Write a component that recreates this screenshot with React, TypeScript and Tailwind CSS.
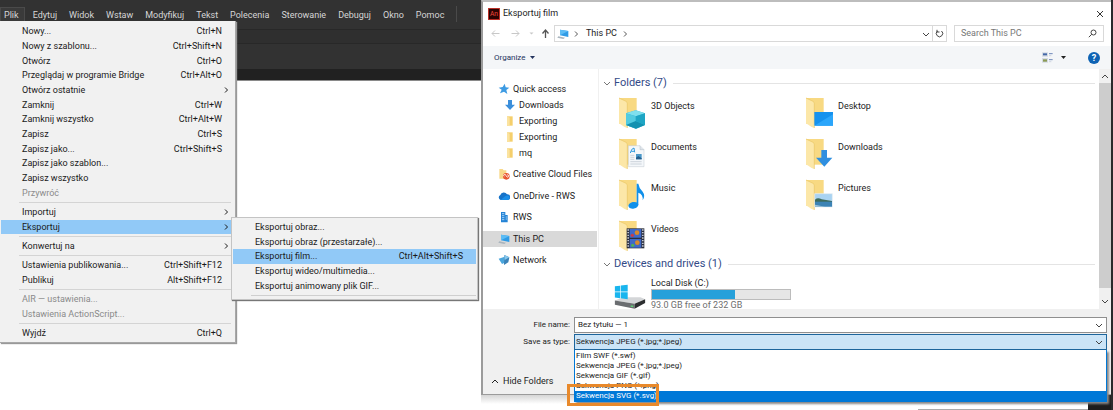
import { ReactNode } from 'react'
import clsx from 'clsx'

type MenuEntry = {
  label: string
  keys?: string
  submenu?: boolean
  disabled?: boolean
  active?: boolean
}

const MENU_BAR = [
  'Plik',
  'Edytuj',
  'Widok',
  'Wstaw',
  'Modyfikuj',
  'Tekst',
  'Polecenia',
  'Sterowanie',
  'Debuguj',
  'Okno',
  'Pomoc',
]

const FILE_MENU: MenuEntry[][] = [
  [
    { label: 'Nowy...', keys: 'Ctrl+N' },
    { label: 'Nowy z szablonu...', keys: 'Ctrl+Shift+N' },
    { label: 'Otwórz', keys: 'Ctrl+O' },
    { label: 'Przeglądaj w programie Bridge', keys: 'Ctrl+Alt+O' },
    { label: 'Otwórz ostatnie', submenu: true },
    { label: 'Zamknij', keys: 'Ctrl+W' },
    { label: 'Zamknij wszystko', keys: 'Ctrl+Alt+W' },
    { label: 'Zapisz', keys: 'Ctrl+S' },
    { label: 'Zapisz jako...', keys: 'Ctrl+Shift+S' },
    { label: 'Zapisz jako szablon...' },
    { label: 'Zapisz wszystko' },
    { label: 'Przywróć', disabled: true },
  ],
  [
    { label: 'Importuj', submenu: true },
    { label: 'Eksportuj', submenu: true, active: true },
  ],
  [{ label: 'Konwertuj na', submenu: true }],
  [
    { label: 'Ustawienia publikowania...', keys: 'Ctrl+Shift+F12' },
    { label: 'Publikuj', keys: 'Alt+Shift+F12' },
  ],
  [
    { label: 'AIR — ustawienia...', disabled: true },
    { label: 'Ustawienia ActionScript...', disabled: true },
  ],
  [{ label: 'Wyjdź', keys: 'Ctrl+Q' }],
]

// heights of the groups above, one line is a bit under 15px
const GROUP_HEIGHTS = ['h-44', 'h-[29px]', 'h-[14px]', 'h-[29px]', 'h-[29px]', 'h-[14px]']

const EXPORT_MENU: MenuEntry[] = [
  { label: 'Eksportuj obraz...' },
  { label: 'Eksportuj obraz (przestarzałe)...' },
  { label: 'Eksportuj film...', keys: 'Ctrl+Alt+Shift+S', active: true },
  { label: 'Eksportuj wideo/multimedia...' },
  { label: 'Eksportuj animowany plik GIF...' },
]

const FILE_TYPES = [
  'Film SWF (*.swf)',
  'Sekwencja JPEG (*.jpg;*.jpeg)',
  'Sekwencja GIF (*.gif)',
  'Sekwencja PNG (*.png)',
  'Sekwencja SVG (*.svg)',
]

function Chevron({ dir, className }: { dir: 'up' | 'down' | 'right'; className?: string }) {
  const d = {
    up: 'M1 6 L4 3 L7 6',
    down: 'M1 3 L4 6 L7 3',
    right: 'M3 1.5 L5.5 4 L3 6.5',
  }[dir]
  return (
    <svg viewBox="0 0 8 8" className={clsx('size-2 shrink-0', className)} fill="none" stroke="currentColor">
      <path d={d} />
    </svg>
  )
}

function MenuRow({ item, className }: { item: MenuEntry; className: string }) {
  return (
    <button
      type="button"
      disabled={item.disabled}
      className={clsx(
        'flex min-h-0 w-full items-center justify-between leading-3 whitespace-nowrap',
        item.disabled ? 'text-[#8a8a8a]' : 'text-[#1a1a1a]',
        item.active && 'bg-[#91c9f7]',
        className,
      )}
    >
      <span>{item.label}</span>
      {item.keys && <span>{item.keys}</span>}
      {item.submenu && <Chevron dir="right" className="-mr-2" />}
    </button>
  )
}

function FileMenu() {
  return (
    <div className="absolute top-[21px] left-0 z-10 w-[236px] border-r border-b border-[#a8a8a8] bg-[#f1f1f1] pt-[3px] pb-0.5 text-[9px] shadow-[1px_1px_1px_#999]">
      {FILE_MENU.map((group, i) => (
        <div key={i}>
          {i > 0 && (
            <div className="flex h-[5px] items-center pr-1 pl-[19px]">
              <hr className="w-full border-[#d4d4d4]" />
            </div>
          )}
          <div className={clsx('grid auto-rows-fr pr-[3px] pl-px', GROUP_HEIGHTS[i])}>
            {group.map((item) => (
              <MenuRow key={item.label} item={item} className="pr-[10px] pl-[21px]" />
            ))}
          </div>
        </div>
      ))}
    </div>
  )
}

function ExportMenu() {
  return (
    <div className="absolute top-[217px] left-[231px] z-20 w-[247px] border border-[#c4c4c4] bg-[#f1f1f1] px-px pt-0.5 pb-[3px] text-[9px] shadow-[1px_1px_1px_#777]">
      <div className="grid h-[73px] auto-rows-fr">
        {EXPORT_MENU.map((item) => (
          <MenuRow key={item.label} item={item} className="pr-[13px] pl-[22px]" />
        ))}
      </div>
      <hr className="mt-0.5 ml-[18px] border-[#cfcfcf]" />
    </div>
  )
}

function Editor() {
  return (
    <section className="relative w-[481px] shrink-0 bg-white">
      <nav className="flex h-[29px] items-end bg-[#323232] pb-[7px] text-[9px] text-[#d6d6d6]">
        <div className="flex items-center gap-1">
          {MENU_BAR.map((name, i) => (
            <button
              key={name}
              type="button"
              className={clsx(
                'h-[14px] border border-b-0 px-[3px] leading-3',
                i === 0 ? 'border-[#4a4a4a] bg-[#3a3a3a] pr-[5px]' : 'border-transparent',
              )}
            >
              {name}
            </button>
          ))}
          <div className="ml-1 h-4 w-px bg-[#4a4a4a]" />
        </div>
      </nav>
      <div className="h-[15px] border-y border-[#282828] bg-[#2f2f2f]" />
      <div className="h-[25px] bg-[#323232]" />
      <div className="h-3 border-b border-[#8a8a8a] bg-[#212121]" />
      <FileMenu />
      <ExportMenu />
    </section>
  )
}

// ---- small icons ----

function PcIcon({ className }: { className?: string }) {
  return (
    <svg viewBox="0 0 36 36" className={clsx('size-3 shrink-0', className)}>
      <path d="M9 5 L34 9 V27 L9 22Z" fill="#2f9be6" />
      <path d="M9 5 L34 9 L9 22Z" fill="#5cbcf5" />
      <path d="M4 25 L24 29 L19 33 L1 29Z" fill="#a9b4bd" />
    </svg>
  )
}

function MiniFolder() {
  return (
    <svg viewBox="0 0 36 36" className="size-3 shrink-0">
      <path d="M9 4 H26 V32 H9Z" fill="#f5cf6c" />
      <path d="M9 4 L17 8 V34 L9 30Z" fill="#fbe3a0" />
    </svg>
  )
}

function StarIcon() {
  return (
    <svg viewBox="0 0 36 36" className="size-3 shrink-0">
      <path d="M20 2 L23 13 L34 14 L25 21 L28 33 L18 26 L6 31 L11 20 L2 14 L14 12Z" fill="#3d9be3" />
    </svg>
  )
}

function DownIcon() {
  return (
    <svg viewBox="0 0 36 36" className="size-3 shrink-0">
      <path d="M12 3 H24 V17 H33 L18 33 L3 17 H12Z" fill="#3b8fdb" />
    </svg>
  )
}

function CreativeCloudIcon() {
  return (
    <svg viewBox="0 0 36 36" className="size-3 shrink-0">
      <path d="M4 3 H14 L17 7 H25 V32 H4Z" fill="#f8d88a" />
      <circle cx="25" cy="25" r="10" fill="#e8542f" />
      <path d="M19 26 a3.500 3.500 0 1 1 5 -3 l3 4 a3.500 3.500 0 1 0 0 -6" fill="none" stroke="#fff" strokeWidth="2.500" />
    </svg>
  )
}

function OneDriveIcon() {
  return (
    <svg viewBox="0 0 36 36" className="size-3 shrink-0">
      <path d="M8 30 a8 8 0 0 1 -1 -15 A11 11 0 0 1 27 13 A8.500 8.500 0 0 1 29 30Z" fill="#1673c9" />
      <path d="M8 30 L22 18 Q35 14 35 24 Q34 30 29 30Z" fill="#1a8ee8" />
    </svg>
  )
}

function BuildingIcon() {
  return (
    <svg viewBox="0 0 36 36" className="size-3 shrink-0">
      <path d="M9 3 H22 V12 H29 V34 H9Z" fill="#2484d6" />
      <path d="M12 8 H19 M12 14 H19 M12 20 H19 M23 18 H27 M23 24 H27 M12 26 H19" stroke="#bfe0fa" strokeWidth="2.500" />
    </svg>
  )
}

function NetworkIcon() {
  return (
    <svg viewBox="0 0 36 36" className="size-3 shrink-0">
      <path d="M2 14 L20 8 V26 L12 30Z" fill="#4aa6dd" />
      <path d="M19 3 L34 10 L31 25 L18 33Z" fill="#3a82b8" />
      <path d="M19 3 L34 10 L20 18Z" fill="#86c7ec" />
    </svg>
  )
}

function FolderIcon({ children }: { children: ReactNode }) {
  return (
    <svg viewBox="0 0 84 96" className="h-8 w-7 shrink-0">
      <path d="M3 3 H56 V80 H3Z" fill="#f8d982" />
      <path d="M3 3 L24 13 Q28 15 28 20 V93 L20 90 L3 79Z" fill="#fce7a8" />
      <path d="M3 3 L24 13 Q28 15 28 20 V93" fill="none" stroke="#e9c664" strokeWidth="2" />
      {children}
    </svg>
  )
}

const FOLDERS: { name: string; badge: ReactNode }[] = [
  {
    name: '3D Objects',
    badge: (
      <>
        <path d="M24 49 L53 40 L81 49 V84 L54 95 L24 84Z" fill="#2fb6d3" />
        <path d="M24 49 L53 40 L81 49 L54 58Z" fill="#7fe0ee" />
        <path d="M24 49 L54 58 V95 L24 84Z" fill="#52cbe0" />
        <path d="M24 84 L53 72 L81 84 L54 95Z" fill="#1391b0" />
        <path d="M53 58 L81 49 V84 L53 72Z" fill="#1ea5c4" />
      </>
    ),
  },
  {
    name: 'Desktop',
    badge: (
      <>
        <path d="M28 45 H84 V86 H28Z" fill="#1592ee" />
        <path d="M28 86 L84 52 V86Z" fill="#2ba6fb" />
      </>
    ),
  },
  {
    name: 'Documents',
    badge: (
      <>
        <path d="M31 23 H66 L78 35 V86 H31Z" fill="#f4f7fa" stroke="#c0c8d0" strokeWidth="1.500" />
        <path d="M66 23 V35 H78" fill="#dfe5ea" stroke="#b4bec8" strokeWidth="1.500" />
        <path d="M37 45 Q40 31 48 30 L50 43 M40 40 H48" fill="none" stroke="#2f9ade" strokeWidth="3" />
        <path d="M54 48 H71 V64 H54Z" fill="#4a98c9" />
        <path d="M54 59 L61 54 L71 61 V64 H54Z" fill="#255e8c" />
        <path d="M37 52 H49 M37 58 H49 M37 64 H49 M37 71 H71 M37 78 H71" stroke="#b9c3cc" strokeWidth="2" />
      </>
    ),
  },
  {
    name: 'Downloads',
    badge: <path d="M49 36 H66 V59 H82 L58 86 L33 59 H49Z" fill="#2f8fe0" />,
  },
  {
    name: 'Music',
    badge: (
      <>
        <ellipse cx="46" cy="79" rx="15" ry="10" fill="#1090ea" transform="rotate(-12 46 79)" />
        <path d="M56 14 H61 Q63 28 74 38 Q83 50 74 64 Q76 46 61 41 V79 H56Z" fill="#1090ea" />
      </>
    ),
  },
  {
    name: 'Pictures',
    badge: (
      <>
        <path d="M29 44 H82 V84 H29Z" fill="#a9d3f2" stroke="#e8eef2" strokeWidth="2" />
        <path d="M30 62 Q38 54 50 61 L81 66 V70 H30Z" fill="#3d6b5c" />
        <path d="M30 68 H81 V83 H30Z" fill="#3c83b5" />
        <path d="M30 77 L60 83 H30Z" fill="#9fc4d8" />
      </>
    ),
  },
  {
    name: 'Videos',
    badge: (
      <>
        <path d="M26 25 H79 V85 H26Z" fill="#2b2e3a" />
        <path d="M35 27 H70 V53 H35Z M35 57 H70 V83 H35Z" fill="#3f69c9" />
        <circle cx="57" cy="38" r="7" fill="#d98a2c" />
        <circle cx="43" cy="46" r="5" fill="#c93d4a" />
        <circle cx="58" cy="68" r="7" fill="#d98a2c" />
        <circle cx="44" cy="76" r="5" fill="#4fb05a" />
        <path d="M30.500 28 V84 M74.500 28 V84" stroke="#e2e6ee" strokeWidth="4" strokeDasharray="4 4" />
      </>
    ),
  },
]

function DriveIcon() {
  return (
    <svg viewBox="0 0 96 76" className="h-[25px] w-8 shrink-0">
      <path d="M2 50 L28 40 H80 L94 46 L62 60Z" fill="#d4d6d8" />
      <path d="M2 50 L62 60 V75 L2 63Z" fill="#6a6d70" />
      <path d="M62 60 L94 46 V58 L62 75Z" fill="#2c2e30" />
      <path d="M50 65 L58 66 V70 L50 69Z" fill="#5fe07a" />
      <path d="M2 7 L18 5 V23 H2Z M20 4.500 L41 2 V23 H20Z M2 25 H18 V43 L2 41Z M20 25 H41 V46 L20 43Z" fill="#19b5ee" />
    </svg>
  )
}

const QUICK_LINKS: { name: string; icon: ReactNode }[] = [
  { name: 'Downloads', icon: <DownIcon /> },
  { name: 'Exporting', icon: <MiniFolder /> },
  { name: 'Exporting', icon: <MiniFolder /> },
  { name: 'mq', icon: <MiniFolder /> },
]

const PLACES: { name: string; icon: ReactNode; selected?: boolean }[] = [
  { name: 'Creative Cloud Files', icon: <CreativeCloudIcon /> },
  { name: 'OneDrive - RWS', icon: <OneDriveIcon /> },
  { name: 'RWS', icon: <BuildingIcon /> },
  { name: 'This PC', icon: <PcIcon />, selected: true },
  { name: 'Network', icon: <NetworkIcon /> },
]

function AddressRow() {
  return (
    <div className="flex h-[17px] items-center pr-[7px] pl-2 text-[9px]">
      <div className="flex w-[63px] items-center gap-[9px]">
        <button type="button" aria-label="Back" className="text-[#c8c8c8]">
          <svg viewBox="0 0 9 9" className="size-[9px]" fill="none" stroke="currentColor">
            <path d="M4 1.500 L1 4.500 L4 7.500 M1 4.500 H8.500" />
          </svg>
        </button>
        <button type="button" aria-label="Forward" className="ml-0.5 text-[#c8c8c8]">
          <svg viewBox="0 0 9 9" className="size-[9px]" fill="none" stroke="currentColor">
            <path d="M5 1.500 L8 4.500 L5 7.500 M8 4.500 H0.500" />
          </svg>
        </button>
        <button type="button" aria-label="Recent locations" className="text-[#c8c8c8]">
          <svg viewBox="0 0 5 5" className="size-[5px]" fill="currentColor">
            <path d="M0.500 1.500 H4.500 L2.500 3.500Z" />
          </svg>
        </button>
        <button type="button" aria-label="Up" className="-ml-0.5 text-[#555]">
          <svg viewBox="0 0 9 9" className="size-[9px]" fill="none" stroke="currentColor" strokeWidth="1.300">
            <path d="M1.500 4.500 L4.500 1 L7.500 4.500 M4.500 1 V9" />
          </svg>
        </button>
      </div>
      <div className="flex h-full min-w-0 flex-1 items-center border border-[#d9d9d9] text-[#222]">
        <PcIcon className="ml-0.5" />
        <Chevron dir="right" className="mr-1.5 ml-[3px] text-[#555]" />
        <span>This PC</span>
        <Chevron dir="right" className="ml-1 text-[#555]" />
        <button type="button" aria-label="Previous locations" className="mr-0.5 ml-auto">
          <Chevron dir="down" className="text-[#444]" />
        </button>
        <button
          type="button"
          aria-label="Refresh"
          className="flex h-full w-[14px] items-center justify-center border-l border-[#d9d9d9] text-[#444]"
        >
          <svg viewBox="0 0 9 9" className="size-[9px]" fill="none" stroke="currentColor">
            <path d="M6.500 2 A3.200 3.200 0 1 1 2.500 2 M2 0.800 V3 H4.500" />
          </svg>
        </button>
      </div>
      <div className="ml-[7px] flex h-full w-[150px] shrink-0 items-center border border-[#d9d9d9] px-1.5">
        <input
          type="text"
          aria-label="Search This PC"
          placeholder="Search This PC"
          className="min-w-0 flex-1 outline-none placeholder:text-[#777]"
        />
        <svg viewBox="0 0 9 9" className="size-[9px]" fill="none" stroke="#444">
          <circle cx="5.500" cy="3.500" r="2.500" />
          <path d="M3.700 5.300 L0.800 8.200" />
        </svg>
      </div>
    </div>
  )
}

function Toolbar() {
  return (
    <div className="mt-1 flex h-[23px] items-center bg-[#f4f6f8] px-[11px] text-[#24345e]">
      <button type="button" className="flex items-center gap-1 text-[8px]">
        Organize
        <svg viewBox="0 0 5 5" className="size-[5px]" fill="currentColor">
          <path d="M0 1 H5 L2.500 4Z" />
        </svg>
      </button>
      <button type="button" aria-label="Change your view" className="ml-auto flex items-center gap-2">
        <svg viewBox="0 0 33 33" className="size-[11px]">
          <path d="M0 1 H18 V14 H0Z M0 18 H18 V32 H0Z" fill="#d5dbe3" />
          <path d="M3 4 H15 V10 H3Z" fill="#4468a8" />
          <path d="M3 22 H15 V29 H3Z" fill="#8a9a54" />
          <path d="M21 5 H32 M21 23 H32" stroke="#6d86b8" strokeWidth="3" />
          <path d="M21 11 H28 M21 29 H28" stroke="#bcc6d6" strokeWidth="2" />
        </svg>
        <svg viewBox="0 0 5 5" className="size-[5px]" fill="#222">
          <path d="M0 1 H5 L2.500 4Z" />
        </svg>
      </button>
      <button
        type="button"
        aria-label="Help"
        className="ml-[22px] flex size-3 items-center justify-center rounded-full bg-[#0e63b4] text-[9px] leading-3 font-bold text-white"
      >
        ?
      </button>
    </div>
  )
}

function SectionHeader({ title }: { title: string }) {
  return (
    <h2 className="flex h-4 items-center gap-[3px] pr-1 text-[11px] leading-4 whitespace-nowrap text-[#334a87]">
      <Chevron dir="down" className="text-[#777]" />
      {title}
      <span className="ml-[3px] h-px flex-1 bg-[#e4e4e4]" />
    </h2>
  )
}

function Browser() {
  return (
    <div className="flex h-60 overflow-hidden bg-white text-[9px] text-[#1c1c1c]">
      <ul className="flex w-[116px] shrink-0 flex-col justify-between border-r border-[#f0f0f0] pt-3 pr-px pb-[41px] leading-4 whitespace-nowrap">
        <li>
          <a href="#quick" className="flex h-4 items-center gap-[3px] pl-[15px]">
            <StarIcon />
            Quick access
          </a>
          <ul>
            {QUICK_LINKS.map((link, i) => (
              <li key={i}>
                <a href="#folder" className="flex h-4 items-center gap-[3px] pl-[21px]">
                  {link.icon}
                  {link.name}
                </a>
              </li>
            ))}
          </ul>
        </li>
        {PLACES.map((place) => (
          <li key={place.name}>
            <a
              href="#place"
              className={clsx('flex h-4 items-center gap-[3px] pl-[15px]', place.selected && 'bg-[#d9d9d9]')}
            >
              {place.icon}
              {place.name}
            </a>
          </li>
        ))}
      </ul>

      <div className="min-w-0 flex-1 pt-1.5 pl-1">
        <SectionHeader title="Folders (7)" />
        <ul className="mt-1.5 grid grid-cols-[187px_187px] gap-y-[9px] pl-[15px]">
          {FOLDERS.map((folder) => (
            <li key={folder.name} className="flex h-8 items-start gap-[5px] leading-[18px]">
              <FolderIcon>{folder.badge}</FolderIcon>
              {folder.name}
            </li>
          ))}
        </ul>
        <div className="mt-1">
          <SectionHeader title="Devices and drives (1)" />
        </div>
        <div className="flex gap-[5px] pt-1.5 pl-[11px]">
          <div className="pt-1.5">
            <DriveIcon />
          </div>
          <div className="w-[140px] leading-[11px]">
            <p>Local Disk (C:)</p>
            <div className="h-[11px] border border-[#bcbcbc] bg-[#e6e6e6]">
              <div className="h-full bg-[#26a0da]" style={{ width: `${((232 - 93) / 232) * 100}%` }} />
            </div>
            <p className="text-[#6d6d6d]">93.0 GB free of 232 GB</p>
          </div>
        </div>
      </div>

      <div className="flex w-3 shrink-0 flex-col items-center bg-[#f0f0f0] text-[#444]">
        <Chevron dir="up" className="my-[3px]" />
        <div className="w-full flex-1 bg-[#cdcdcd]" />
        <Chevron dir="down" className="mt-[9px] mb-1" />
      </div>
    </div>
  )
}

function SaveForm() {
  return (
    <div className="flex-1 bg-[#f0f0f0] pt-2 pr-1 text-[8px] text-[#1c1c1c]">
      <div className="flex h-4 items-center gap-1">
        <label htmlFor="file-name" className="w-[87px] text-right">
          File name:
        </label>
        <div className="flex h-full min-w-0 flex-1 items-center border border-[#8f8f8f] bg-white pr-[3px]">
          <input
            id="file-name"
            type="text"
            defaultValue="Bez tytułu — 1"
            className="min-w-0 flex-1 pl-[3px] leading-3 outline-none"
          />
          <Chevron dir="down" className="text-[#444]" />
        </div>
      </div>
      <div className="relative mt-px flex h-4 items-center gap-1">
        <label htmlFor="file-type" className="w-[87px] text-right">
          Save as type:
        </label>
        <div className="flex h-full min-w-0 flex-1 items-center border border-[#1d659c] bg-[#cbe4f7] pr-[3px]">
          <select
            id="file-type"
            defaultValue={FILE_TYPES[1]}
            className="min-w-0 flex-1 appearance-none pl-px leading-3 outline-none"
          >
            {FILE_TYPES.map((type) => (
              <option key={type}>{type}</option>
            ))}
          </select>
          <Chevron dir="down" className="text-[#444]" />
        </div>
        <ul className="absolute top-4 right-0 left-[91px] z-10 border-x border-b border-[#0078d7] bg-white pt-px shadow-[2px_2px_2px_#888]">
          {FILE_TYPES.map((type, i) => (
            <li
              key={type}
              className={clsx('h-[10px] pl-px leading-[10px]', i === 4 && 'bg-[#0078d7] text-white')}
            >
              {type}
            </li>
          ))}
        </ul>
        <div className="absolute top-[50px] left-[84px] z-20 h-[22px] w-[92px] border-3 border-[#e8892b]" />
      </div>
      <button type="button" className="mt-6 ml-2 flex items-center gap-1 text-[9px] leading-[14px]">
        <Chevron dir="up" className="text-[#222]" />
        Hide Folders
      </button>
    </div>
  )
}

function ExportDialog() {
  return (
    <section className="flex min-w-0 flex-1 flex-col bg-[#fafafa]">
      <div className="flex h-[395px] flex-col border-t-2 border-b border-l-2 border-t-[#bdbdbd] border-b-[#9b9b9b] border-l-[#9b9b9b] bg-white">
        <div className="flex h-[23px] items-center pr-[7px] pl-[5px] text-[9px] text-[#222]">
          <svg viewBox="0 0 36 36" className="size-3">
            <path d="M1 1 H35 V35 H1Z" fill="#2b0302" stroke="#c8281e" strokeWidth="3" />
            <text x="18" y="25" textAnchor="middle" fontSize="20" fill="#f0483a">
              An
            </text>
          </svg>
          <h1 className="ml-[3px]">Eksportuj film</h1>
          <button type="button" aria-label="Close" className="ml-auto">
            <svg viewBox="0 0 8 8" className="size-2" stroke="#333">
              <path d="M1 1 L7 7 M7 1 L1 7" />
            </svg>
          </button>
        </div>
        <AddressRow />
        <Toolbar />
        <Browser />
        <SaveForm />
      </div>
      <div className="flex min-h-[15px] flex-1 justify-end">
        <div className="flex flex-1 items-end justify-end bg-linear-to-b from-[#d6d6d6] to-white to-60%">
          <div className="h-px w-[170px] bg-[#aaa]" />
        </div>
        <div className="w-[23px] bg-[#1d1d1d]" />
      </div>
    </section>
  )
}

export default function App() {
  return (
    <main className="flex min-h-screen bg-white font-['Roboto','Open_Sans',sans-serif]">
      <Editor />
      <ExportDialog />
      <div className="w-0.5 shrink-0 bg-[#2a2a2c]" />
    </main>
  )
}
